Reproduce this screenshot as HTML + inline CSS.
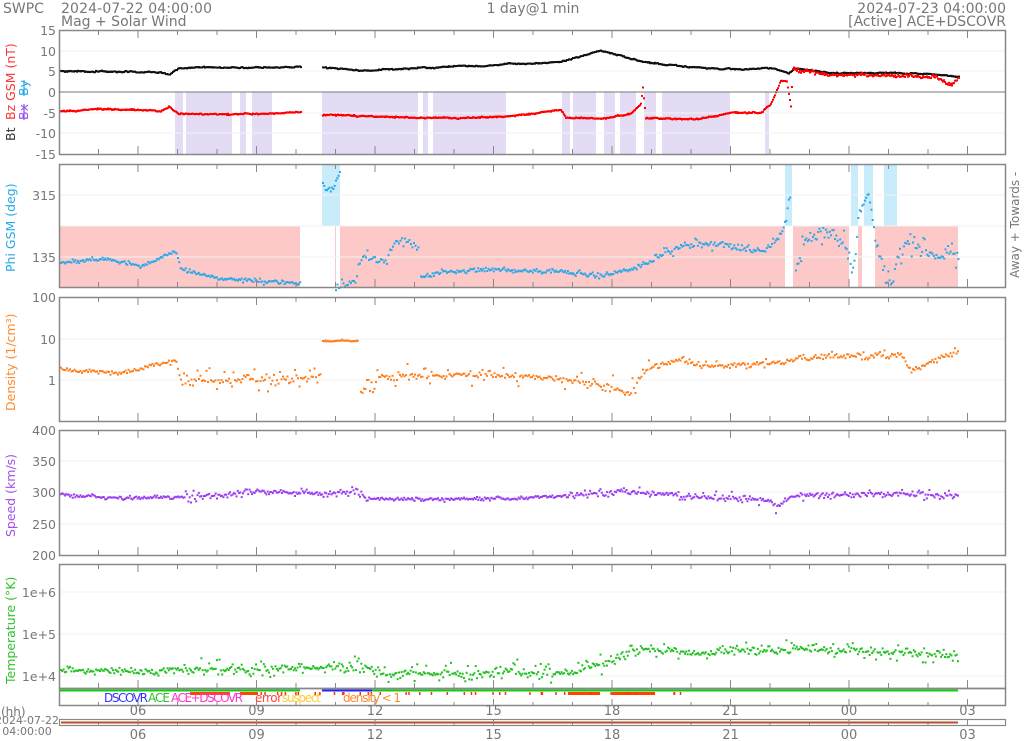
<!DOCTYPE html>
<html><head><meta charset="utf-8"><style>
html,body{margin:0;padding:0;background:#fff;width:1024px;height:741px;overflow:hidden}
svg{display:block}
text{font-family:"DejaVu Sans","Liberation Sans",sans-serif}
</style></head><body>
<svg id="s" width="1024" height="741" viewBox="0 0 1024 741" xmlns="http://www.w3.org/2000/svg">
<g id="bg"></g><g id="dots"></g><g id="fr"></g>
<g fill="#777" font-size="14">
<text x="3" y="13">SWPC</text>
<text x="61" y="13" textLength="151">2024-07-22 04:00:00</text>
<text x="61" y="26">Mag + Solar Wind</text>
<text x="533" y="13" text-anchor="middle">1 day@1 min</text>
<text x="1006" y="13" text-anchor="end">2024-07-23 04:00:00</text>
<text x="1006" y="26" text-anchor="end">[Active] ACE+DSCOVR</text>
</g>
<g font-size="12.5" fill="#777" text-anchor="end" id="yl"></g>
<g font-size="12.5">
<text transform="translate(15,141) rotate(-90)" fill="#333">Bt</text>
<text transform="translate(15,120) rotate(-90)" fill="#f33">Bz GSM (nT)</text>
<text transform="translate(28,120) rotate(-90)" fill="#9b4ee8" text-decoration="line-through">Bx</text>
<text transform="translate(28,96) rotate(-90)" fill="#29a9e8" text-decoration="line-through">By</text>
<text transform="translate(15,272) rotate(-90)" fill="#29a9e8">Phi GSM (deg)</text>
<text transform="translate(15,411) rotate(-90)" fill="#ff8a2a">Density (1/cm³)</text>
<text transform="translate(15,537) rotate(-90)" fill="#a24ef0">Speed (km/s)</text>
<text transform="translate(15,684) rotate(-90)" fill="#2ec22e">Temperature (°K)</text>
<text transform="translate(1019,278) rotate(-90)" fill="#777" font-size="12">Away +  Towards -</text>
</g>
<g font-size="12" style="font-family:'Liberation Sans',sans-serif">
<text x="104" y="702" fill="#33f" textLength="44">DSCOVR</text>
<text x="148" y="702" fill="#2ec22e" textLength="22">ACE</text>
<text x="171" y="702" fill="#f3c" textLength="72">ACE+DSCOVR</text>
<text x="255" y="702" fill="#f44" textLength="27">error</text>
<text x="282" y="702" fill="#fc3" textLength="39">suspect</text>
<text x="343" y="702" fill="#ff8a2a" textLength="58">density &lt; 1</text>
<text x="1" y="716" fill="#777" font-size="12">(hh)</text>
<text x="27" y="724" fill="#777" font-size="11" text-anchor="middle">2024-07-22</text>
<text x="27" y="735" fill="#777" font-size="11" text-anchor="middle">04:00:00</text>
</g>
<g id="xl" font-size="13" fill="#777" text-anchor="middle"></g>
</svg>
<script>
var NS="http://www.w3.org/2000/svg";
function el(p,t,a){var e=document.createElementNS(NS,t);for(var k in a)e.setAttribute(k,a[k]);document.getElementById(p).appendChild(e);return e;}
var seed=7;function rnd(){seed=(seed*16807)%2147483647;return (seed-1)/2147483646;}
function gn(){return (rnd()+rnd()+rnd()-1.5)/1.5;}
var X0=59,X1=1006,PH=39.5;
var panels=[[30,154],[164,287],[297,421],[430,555],[564,688]];
function sh(y0,y1,col,rs){rs.forEach(function(r){el("bg","rect",{x:r[0],y:y0,width:r[1]-r[0],height:y1-y0,fill:col});});}
sh(92,154,"#e4dcf4",[[175,183],[186,232],[240,246],[252,272],[322,418],[423,428],[433,506],[562,570],[573,596],[604,615],[620,636],[644,656],[662,730],[765,769]]);
sh(226,287,"#fdc8c8",[[60,300],[335,336],[340,785],[793,849],[858,862],[875,958]]);
sh(164,226,"#c9ecfb",[[322,340],[785,792],[851,858],[864,873],[884,897]]);
panels.forEach(function(p,i){
 el("fr","rect",{x:X0+.5,y:p[0]+.5,width:X1-X0-1,height:p[1]-p[0],fill:"none",stroke:"#888","stroke-width":1.5});
 for(var h=1;h<24;h++){var x=X0+h*PH;var L=(h%3==2)?8:5;
  el("fr","line",{x1:x,x2:x,y1:p[0],y2:p[0]+L,stroke:"#888"});el("fr","line",{x1:x,x2:x,y1:p[1],y2:p[1]-L,stroke:"#888"});}
});
el("fr","line",{x1:X0,x2:X1,y1:92,y2:92,stroke:"#777"});
el("fr","rect",{x:X0+.5,y:688.5,width:X1-X0-1,height:17,fill:"none",stroke:"#888","stroke-width":1.5});
el("fr","rect",{x:X0+.5,y:719.5,width:X1-X0-1,height:6,fill:"none",stroke:"#888","stroke-width":1.2});
el("fr","line",{x1:X0+2,x2:958,y1:722.5,y2:722.5,stroke:"#b5502a","stroke-width":2});
for(var h=1;h<24;h++){var x=X0+h*PH;var L=(h%3==2)?7:4;
 el("fr","line",{x1:x,x2:x,y1:706,y2:706-L,stroke:"#888"});el("fr","line",{x1:x,x2:x,y1:726,y2:726-L+1,stroke:"#888"});}
[51,71,113,133,195,226,257,339,380,461,492,524,592,634,676].forEach(function(g){el("bg","line",{x1:X0,x2:X1,y1:g,y2:g,stroke:"#f2f2f2"});});
function yl(y,t){var e=el("yl","text",{x:56,y:y+5});e.textContent=t;}
[[30,"15"],[51,"10"],[71,"5"],[92,"0"],[113,"-5"],[133,"-10"],[154,"-15"],[195,"315"],[257,"135"],[297,"100"],[339,"10"],[380,"1"],[430,"400"],[461,"350"],[492,"300"],[524,"250"],[555,"200"],[592,"1e+6"],[634,"1e+5"],[676,"1e+4"]].forEach(function(a){yl(a[0],a[1]);});
var labs=["06","09","12","15","18","21","00","03"];
for(var i=0;i<8;i++){var x=X0+(2+3*i)*PH;[715,739].forEach(function(y){var e=el("xl","text",{x:x,y:y});e.textContent=labs[i];});}
function interp(pts,x){for(var i=0;i<pts.length-1;i++){if(x>=pts[i][0]&&x<=pts[i+1][0]){var t=(x-pts[i][0])/(pts[i+1][0]-pts[i][0]);return pts[i][1]+t*(pts[i+1][1]-pts[i][1]);}}return null;}
function ser(pts,col,noise,step,sz,gaps,sc){var w=0;for(var x=pts[0][0];x<=pts[pts.length-1][0];x+=step){
 var skip=false;(gaps||[]).forEach(function(g){if(x>g[0]&&x<g[1])skip=true;});if(skip)continue;
 var y=interp(pts,x);if(y===null)continue;w+=gn()*0.6;w*=0.9;y+=gn()*noise+w;
 if(sc){var s=sc(x);if(s>0&&rnd()<0.6)y+=gn()*s;}
 el("dots","rect",{x:x.toFixed(1),y:y.toFixed(1),width:sz,height:sz,fill:col});}}
var G=[[300,322]];
ser([[60,70],[160,71],[168,74],[175,69],[180,67],[300,66],[322,67],[360,69],[420,67],[500,64],[560,61],[600,50],[640,60],[680,65],[720,68],[775,68],[788,72],[794,67],[830,72],[900,72],[958,75]],"#111",0.6,1,2,G);
ser([[60,110],[100,108],[160,110],[168,106],[178,113],[230,114],[300,111],[322,114],[420,117],[500,116],[540,112],[560,109],[565,117],[600,118],[630,113],[640,103],[642,87],[645,117],[700,118],[730,111],[760,112],[770,103],[780,80],[786,80],[790,105],[792,68],[830,74],[900,75],[935,76],[950,85],[958,78]],"#f00",0.8,1,2,G,function(x){return x>790?3:0;});
var pb=function(x){return (x>640&&x<958)?8:3;};
ser([[60,262],[100,258],[140,265],[175,250],[180,268],[220,278],[300,283]],"#29a9e8",2,1.3,2,null,pb);
ser([[322,185],[330,190],[340,170]],"#29a9e8",5,1.3,2);
ser([[335,287],[355,280],[360,255],[385,260],[395,240],[418,245]],"#29a9e8",5,1.5,2,null,function(){return 8;});
ser([[420,275],[470,268],[520,270],[560,270],[600,275],[640,265],[680,245],[720,243],[760,250],[780,235],[786,215],[790,190]],"#29a9e8",3,1.3,2,null,pb);
ser([[795,270],[805,235],[830,232],[845,245],[852,270],[858,215],[868,190],[875,245],[890,280],[905,240],[930,255],[958,255]],"#29a9e8",8,1.3,2,null,function(){return 14;});
var dsc=function(x){return (x>180&&x<320)||(x>560&&x<650)||(x>360&&x<520)?16:(x>640?6:3);};
ser([[60,368],[120,372],[175,360],[180,380],[300,378],[320,372]],"#ff7f1e",3,1.5,2,null,dsc);
ser([[322,340],[357,340]],"#ff7f1e",0.8,1.2,2);
ser([[360,390],[380,375],[500,374],[560,378],[600,385],[630,392],[645,370],[680,358],[700,366],[780,362],[800,356],[900,354],[910,370],[958,350]],"#ff7f1e",3,1.5,2,null,dsc);
ser([[60,493],[100,497],[180,496],[250,491],[322,493],[360,492],[365,498],[500,498],[560,496],[620,490],[680,495],[770,500],[775,507],[790,495],[900,492],[958,496]],"#9b3ef0",2,1.3,2,null,function(x){return (x>180&&x<360)||(x>560&&x<960)?7:2;});
ser([[60,670],[200,669],[320,667],[360,663],[380,672],[560,672],[620,660],[630,648],[700,652],[800,648],[900,652],[958,655]],"#22c022",4,1.3,2,null,function(x){return x>180?12:4;});
el("fr","line",{x1:60,x2:300,y1:690.5,y2:690.5,stroke:"#1c1","stroke-width":2});
el("fr","line",{x1:322,x2:372,y1:690.5,y2:690.5,stroke:"#22f","stroke-width":2});
el("fr","line",{x1:372,x2:958,y1:690.5,y2:690.5,stroke:"#1c1","stroke-width":2});
[[190,230],[240,258],[568,600],[612,655]].forEach(function(r){el("fr","rect",{x:r[0],y:692,width:r[1]-r[0],height:3,fill:"#f40"});});
for(var i=0;i<40;i++){var x=260+rnd()*420;el("fr","rect",{x:x,y:692,width:1.5,height:3,fill:"#f30"});}
</script>
</body></html>
